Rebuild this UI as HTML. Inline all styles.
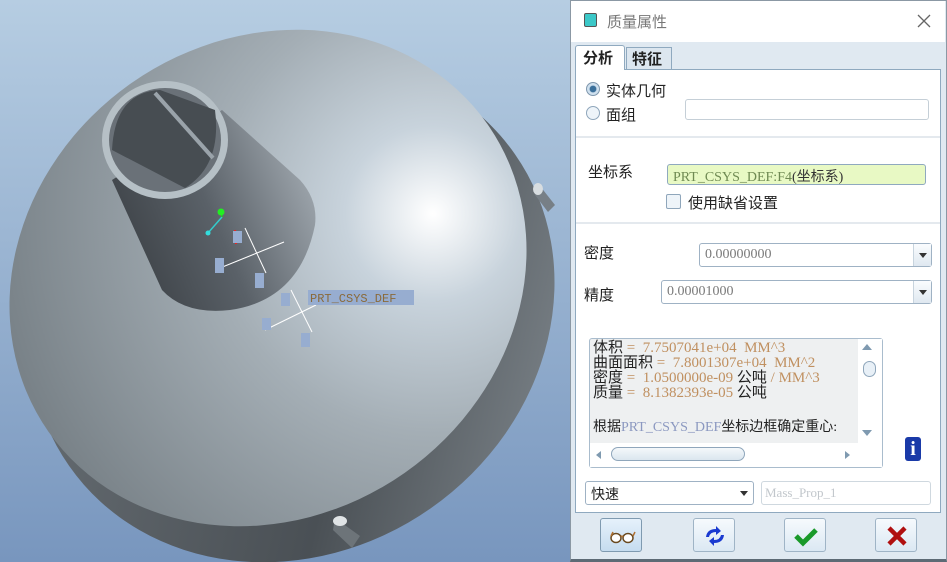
<!DOCTYPE html>
<html><head><meta charset="utf-8"><style>
*{margin:0;padding:0;box-sizing:border-box}
html,body{width:947px;height:562px;overflow:hidden}
body{position:relative;font-family:"Liberation Sans","Noto Sans CJK SC",sans-serif;background:#8ea6c6}
.a{position:absolute}
.cn{font-family:"Liberation Sans","Noto Sans CJK SC",sans-serif;font-size:15px;color:#222;white-space:nowrap}
.mono{font-family:"Liberation Serif","Noto Sans CJK SC",serif;white-space:nowrap}
.btn{position:absolute;top:518px;width:42px;height:34px;border:1px solid #9fb4c6;border-radius:3px;background:linear-gradient(#f6fafd,#dbe8f3)}
.btn svg{position:absolute;left:0;top:0}
.dd{position:absolute;border:1px solid #9fb2c4;border-radius:3px;background:#fff;height:24px}
.dd .arr{position:absolute;right:0;top:0;bottom:0;width:18px;border-left:1px solid #c8d4de;background:linear-gradient(#fafcfe,#dfe8f0)}
.dd .arr:after{content:"";position:absolute;left:5px;top:9px;border-left:4px solid transparent;border-right:4px solid transparent;border-top:5px solid #333}
.dd span{position:absolute;left:5px;top:3px;font-size:14px;color:#7a7a7a}
</style></head><body>
<svg class="a" style="left:0;top:0" width="572" height="562">
<defs>
<linearGradient id="bg" x1="0" y1="0" x2="0" y2="1"><stop offset="0" stop-color="#b6cde2"/><stop offset="1" stop-color="#7896be"/></linearGradient>
<radialGradient id="top" gradientUnits="userSpaceOnUse" cx="440" cy="320" r="440"><stop offset="0" stop-color="#ffffff"/><stop offset="0.2" stop-color="#c8d3dc"/><stop offset="0.5" stop-color="#a4aeb5"/><stop offset="1" stop-color="#798288"/></radialGradient>
<linearGradient id="side" x1="0" y1="0" x2="1" y2="1"><stop offset="0" stop-color="#6f767c"/><stop offset="0.6" stop-color="#4a5055"/><stop offset="1" stop-color="#8a9298"/></linearGradient>
<linearGradient id="cone" gradientUnits="userSpaceOnUse" x1="130" y1="260" x2="320" y2="180"><stop offset="0" stop-color="#3f4449"/><stop offset="0.45" stop-color="#5a6168"/><stop offset="1" stop-color="#a2aab1"/></linearGradient>
</defs>
<rect width="572" height="562" fill="url(#bg)"/>
<ellipse cx="292" cy="310" rx="272" ry="242" transform="rotate(-35 292 310)" fill="url(#side)"/>
<ellipse cx="268" cy="278" rx="268" ry="238" transform="rotate(-35 268 278)" fill="url(#top)"/>
<path d="M112 180 L162 290 Q185 315 230 310 Q300 300 315 225 Q318 200 300 180 L222 110 Z" fill="url(#cone)"/>
<ellipse cx="165" cy="140" rx="63" ry="59" fill="#b6c0c6"/>
<ellipse cx="165" cy="140" rx="56" ry="52" fill="#6a7178"/>
<path d="M112 150 Q115 92 160 90 L215 110 Q222 165 185 188 Z" fill="#474d52"/>
<line x1="155" y1="93" x2="213" y2="158" stroke="#9aa3aa" stroke-width="4"/>
<g stroke="#fff" stroke-width="1"><line x1="220" y1="268" x2="284" y2="242"/><line x1="245" y1="228" x2="266" y2="273"/><line x1="265" y1="330" x2="316" y2="305"/><line x1="291" y1="290" x2="312" y2="332"/></g>
<line x1="222" y1="217" x2="208" y2="233" stroke="#3cc" stroke-width="1.5"/><circle cx="208" cy="233" r="2.5" fill="#3dd"/>
<line x1="222" y1="217" x2="221" y2="211" stroke="#2c2" stroke-width="1.5"/><circle cx="221" cy="212" r="3.5" fill="#2e2"/>
<line x1="235" y1="230" x2="236" y2="244" stroke="#e22" stroke-width="2"/>
<g fill="#97add0"><rect x="233" y="231" width="9" height="12"/><rect x="215" y="258" width="9" height="15"/><rect x="255" y="273" width="9" height="15"/><rect x="281" y="293" width="9" height="13"/><rect x="262" y="318" width="9" height="12"/><rect x="301" y="333" width="9" height="14"/><rect x="308" y="290" width="106" height="15"/></g>
<text x="310" y="302" font-family="Liberation Mono,monospace" font-size="12" fill="#8a6a3a">PRT_CSYS_DEF</text>
<path d="M540 186 L555 205 L548 212 L535 195 Z" fill="#777f86"/><ellipse cx="538" cy="189" rx="5" ry="6" fill="#d8dde0"/>
<path d="M335 518 L360 536 L352 548 L333 530 Z" fill="#6d7479"/><ellipse cx="340" cy="521" rx="7" ry="5" fill="#e0e4e6"/>
</svg>

<div class="a" style="left:570px;top:0;width:377px;height:562px;background:#e0e9f1;border:1px solid #8b98a4;border-bottom:3px solid #5d6a75"></div>
<div class="a" style="left:571px;top:1px;width:374px;height:41px;background:#fff"></div>
<div class="a" style="left:584px;top:13px;width:13px;height:14px;background:#3cc8c8;border:1.5px solid #555;border-radius:2px"></div>
<div class="a cn" style="left:607px;top:11px;color:#777;font-size:15px">质量属性</div>
<svg class="a" style="left:917px;top:14px" width="14" height="14"><path d="M1 1 L13 13 M13 1 L1 13" stroke="#666" stroke-width="1.3"/></svg>
<div class="a" style="left:575px;top:69px;width:366px;height:444px;background:#fff;border:1px solid #8fa9bf"></div>
<div class="a" style="left:575px;top:45px;width:50px;height:25px;background:#fff;border:1px solid #8fa9bf;border-bottom:none;border-radius:3px 3px 0 0"></div>
<div class="a cn" style="left:583px;top:47px;font-weight:bold">分析</div>
<div class="a" style="left:626px;top:47px;width:46px;height:22px;background:#dce6ef;border:1px solid #8fa9bf;border-bottom:none"></div>
<div class="a cn" style="left:632px;top:48px;font-weight:bold">特征</div>

<div class="a" style="left:586px;top:82px;width:14px;height:14px;border-radius:50%;border:1px solid #7f97ad;background:radial-gradient(#3a6f9a 35%,#cfe0ee 45%)"></div>
<div class="a cn" style="left:606px;top:80px">实体几何</div>
<div class="a" style="left:586px;top:106px;width:14px;height:14px;border-radius:50%;border:1px solid #8fa6bb;background:#eef4f9"></div>
<div class="a cn" style="left:606px;top:104px">面组</div>
<div class="a" style="left:685px;top:99px;width:244px;height:21px;border:1px solid #c5cfd7;border-radius:3px"></div>
<div class="a" style="left:576px;top:136px;width:364px;height:2px;background:#e4e9ee"></div>
<div class="a cn" style="left:588px;top:161px">坐标系</div>
<div class="a" style="left:667px;top:164px;width:259px;height:21px;border:1px solid #8fa9bf;border-radius:3px;background:#e8f9c4"></div>
<div class="a mono" style="left:673px;top:166px;font-size:14px;color:#6f8a52">PRT_CSYS_DEF:F4<span style="color:#333">(坐标系)</span></div>
<div class="a" style="left:666px;top:194px;width:15px;height:15px;border:1px solid #8fa6bb;border-radius:2px;background:#eef4f9"></div>
<div class="a cn" style="left:688px;top:192px">使用缺省设置</div>
<div class="a" style="left:576px;top:222px;width:364px;height:2px;background:#e4e9ee"></div>
<div class="a cn" style="left:584px;top:242px">密度</div>
<div class="dd" style="left:699px;top:243px;width:233px"><span class="mono">0.00000000</span><div class="arr"></div></div>
<div class="a cn" style="left:584px;top:284px">精度</div>
<div class="dd" style="left:661px;top:280px;width:271px"><span class="mono">0.00001000</span><div class="arr"></div></div>

<div class="a" style="left:589px;top:338px;width:294px;height:130px;border:1px solid #a9bccd;border-radius:3px;background:#eef0f1;overflow:hidden"></div>
<div class="a" style="left:858px;top:339px;width:24px;height:104px;background:#fff"></div>
<div class="a" style="left:590px;top:443px;width:292px;height:24px;background:#fff"></div>
<div class="a" style="left:862px;top:344px;border-left:5px solid transparent;border-right:5px solid transparent;border-bottom:6px solid #7f9ab0"></div>
<div class="a" style="left:863px;top:361px;width:13px;height:16px;border:1px solid #8fa6bb;border-radius:7px;background:#e8f0f7"></div>
<div class="a" style="left:862px;top:430px;border-left:5px solid transparent;border-right:5px solid transparent;border-top:6px solid #7f9ab0"></div>
<div class="a" style="left:596px;top:451px;border-top:4px solid transparent;border-bottom:4px solid transparent;border-right:5px solid #7f9ab0"></div>
<div class="a" style="left:611px;top:447px;width:134px;height:14px;border:1px solid #8fa6bb;border-radius:7px;background:linear-gradient(#f4f8fb,#dbe6ef)"></div>
<div class="a" style="left:845px;top:451px;border-top:4px solid transparent;border-bottom:4px solid transparent;border-left:5px solid #7f9ab0"></div>
<div class="a mono" style="left:593px;top:341px;font-size:15px;line-height:15px;color:#c09060;white-space:pre"><span style="color:#222">体积</span> =  7.7507041e+04  MM^3
<span style="color:#222">曲面面积</span> =  7.8001307e+04  MM^2
<span style="color:#222">密度</span> =  1.0500000e-09 <span style="color:#222">公吨</span> / MM^3
<span style="color:#222">质量</span> =  8.1382393e-05 <span style="color:#222">公吨</span></div>
<div class="a mono" style="left:593px;top:416px;font-size:14px;color:#8b98c0"><span style="color:#222">根据</span>PRT_CSYS_DEF<span style="color:#222">坐标边框确定重心:</span></div>
<div class="a" style="left:905px;top:437px;width:16px;height:24px;background:#1a3aa8;border-radius:3px;color:#fff;font-weight:bold;font-family:'Liberation Serif',serif;font-size:20px;text-align:center;line-height:24px">i</div>

<div class="dd" style="left:585px;top:481px;width:169px"><span class="cn" style="color:#222;top:2px">快速</span></div>
<div class="a" style="left:740px;top:491px;border-left:4px solid transparent;border-right:4px solid transparent;border-top:5px solid #333"></div>
<div class="a" style="left:761px;top:481px;width:170px;height:24px;border:1px solid #cfd8df;border-radius:3px;background:#fff"></div>
<div class="a mono" style="left:765px;top:485px;font-size:13px;color:#c2c7cc">Mass_Prop_1</div>

<div class="btn" style="left:600px;background:linear-gradient(#e6f1fb,#c6dcef);border-color:#7f9ab0"><svg width="42" height="34"><ellipse cx="15" cy="19" rx="5" ry="4.5" fill="#fff" stroke="#6a4a20" stroke-width="1.5"/><ellipse cx="27" cy="19" rx="5" ry="4.5" fill="#fff" stroke="#6a4a20" stroke-width="1.5"/><path d="M20 18 Q21 16 22 18 M10 17 L12 13 M32 17 L34 13" stroke="#b07030" stroke-width="1.5" fill="none"/></svg></div>
<div class="btn" style="left:693px"><svg width="42" height="34"><path d="M12 18 Q13 10 22 10 L22 7 L27 12 L22 16 L22 13 Q16 13 15 18 Z" fill="#1a3ad0"/><path d="M30 16 Q29 24 20 24 L20 27 L15 22 L20 18 L20 21 Q26 21 27 16 Z" fill="#1a3ad0"/></svg></div>
<div class="btn" style="left:784px"><svg width="42" height="34"><path d="M11 17 L18 24 L31 11" stroke="#1a9a2a" stroke-width="5" fill="none"/></svg></div>
<div class="btn" style="left:875px"><svg width="42" height="34"><path d="M13 9 L29 25 M29 9 L13 25" stroke="#b01010" stroke-width="4.5"/></svg></div>
</body></html>
